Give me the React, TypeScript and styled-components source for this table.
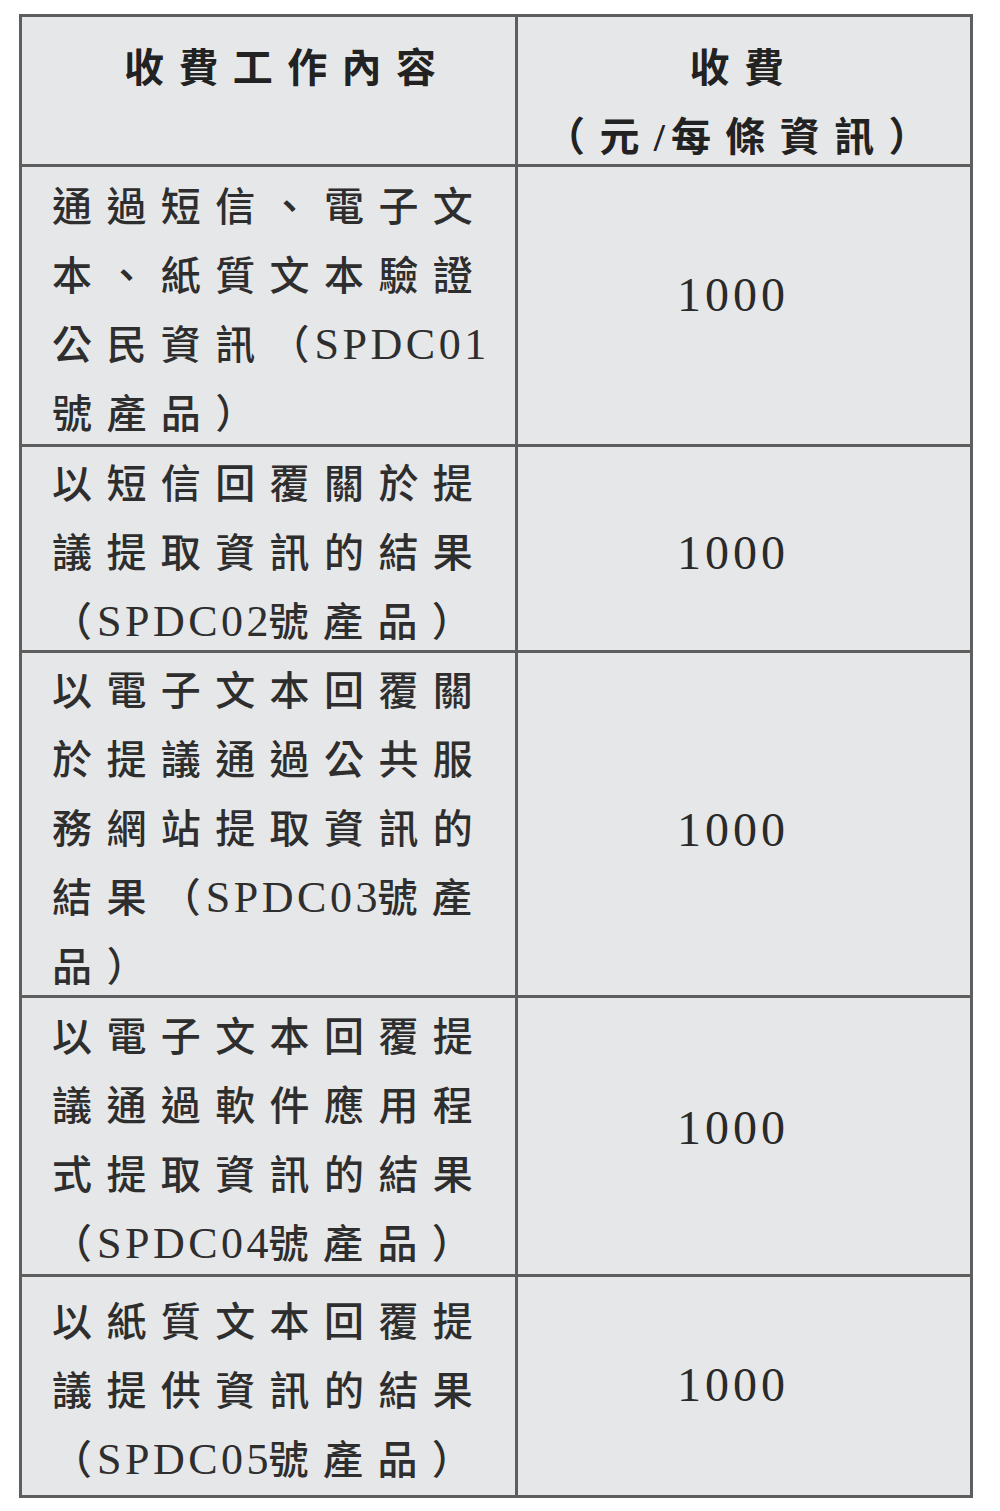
import React from 'react';
import styled, { createGlobalStyle } from 'styled-components';

const Global = createGlobalStyle`
  html, body { margin: 0; padding: 0; background: #ffffff; }
  body { width: 1000px; min-height: 1511px; overflow: hidden; }
`;

const Page = styled.div`
  padding: 14px 0 0 19px;
`;

const Table = styled.div`
  display: grid;
  box-sizing: border-box;
  width: 954px;
  grid-template-columns: 493px 452px;
  grid-template-rows: 147px 277px 203px 342px 276px 218px;
  gap: 3px;
  padding: 3px;
  background: #5e5e5e;
  font-family: "Noto Sans CJK TC", sans-serif;
  color: #2e2e2e;
`;

const HeadCell = styled.div<{ $align: 'left' | 'center'; $padLeft: number }>`
  background: #e6e7e9;
  box-sizing: border-box;
  padding: 14px 0 0 ${(p) => p.$padLeft}px;
  text-align: ${(p) => p.$align};
  font-size: 40px;
  line-height: 69px;
  font-weight: 700;
  letter-spacing: 14.4px;
  color: #222222;
`;

const TextCell = styled.div`
  background: #e6e7e9;
  box-sizing: border-box;
  display: flex;
  flex-direction: column;
  justify-content: center;
  padding: 4px 0 0 30px;
  font-size: 40px;
  line-height: 69px;
  font-weight: 500;
  letter-spacing: 14.4px;
  overflow: visible;
`;

const Line = styled.div`
  display: block;
  white-space: nowrap;
`;

const Paren = styled.span`
  letter-spacing: 5px;
`;

const Lat = styled.span<{ $tight?: boolean }>`
  font-family: "Liberation Serif", serif;
  font-size: 44px;
  font-weight: inherit;
  letter-spacing: 3.5px;
  line-height: 1;
  margin-right: ${(p) => (p.$tight ? -3.5 : 0)}px;
`;

const HeadSlash = styled.span`
  font-family: "Liberation Serif", serif;
  font-weight: 700;
  letter-spacing: 6px;
  line-height: 1;
`;

const FeeCell = styled.div`
  background: #e6e7e9;
  display: flex;
  align-items: center;
  justify-content: center;
  padding-right: 22px;
`;

const Fee = styled.span`
  font-family: "Liberation Serif", serif;
  font-size: 48px;
  line-height: 1;
  letter-spacing: 4px;
  color: #2a2a2a;
`;

type Row = { lines: React.ReactNode[]; fee: string; shift: number };

const code = (c: string, tight = true) => (
  <>
    <Paren>（</Paren>
    <Lat $tight={tight}>{c}</Lat>
  </>
);

const rows: Row[] = [
  {
    lines: [
      '通過短信、電子文',
      '本、紙質文本驗證',
      <>公民資訊{code('SPDC01', false)}</>,
      '號產品）',
    ],
    fee: '1000',
    shift: -11.5,
  },
  {
    lines: [
      '以短信回覆關於提',
      '議提取資訊的結果',
      <>{code('SPDC02')}號產品）</>,
    ],
    fee: '1000',
    shift: 3.5,
  },
  {
    lines: [
      '以電子文本回覆關',
      '於提議通過公共服',
      '務網站提取資訊的',
      <>結果{code('SPDC03')}號產</>,
      '品）',
    ],
    fee: '1000',
    shift: 6,
  },
  {
    lines: [
      '以電子文本回覆提',
      '議通過軟件應用程',
      '式提取資訊的結果',
      <>{code('SPDC04')}號產品）</>,
    ],
    fee: '1000',
    shift: -8,
  },
  {
    lines: [
      '以紙質文本回覆提',
      '議提供資訊的結果',
      <>{code('SPDC05')}號產品）</>,
    ],
    fee: '1000',
    shift: -1.5,
  },
];

export default function App() {
  return (
    <>
      <Global />
      <Page>
        <Table>
          <HeadCell $align="left" $padLeft={102}>
            <Line>收費工作內容</Line>
          </HeadCell>
          <HeadCell $align="center" $padLeft={0}>
            <Line>收費</Line>
            <Line>
              （元<HeadSlash>/</HeadSlash>每條資訊）
            </Line>
          </HeadCell>
          {rows.map((r, i) => (
            <React.Fragment key={i}>
              <TextCell>
                {r.lines.map((l, j) => (
                  <Line key={j}>{l}</Line>
                ))}
              </TextCell>
              <FeeCell>
                <Fee style={{ transform: `translateY(${r.shift}px)` }}>{r.fee}</Fee>
              </FeeCell>
            </React.Fragment>
          ))}
        </Table>
      </Page>
    </>
  );
}
